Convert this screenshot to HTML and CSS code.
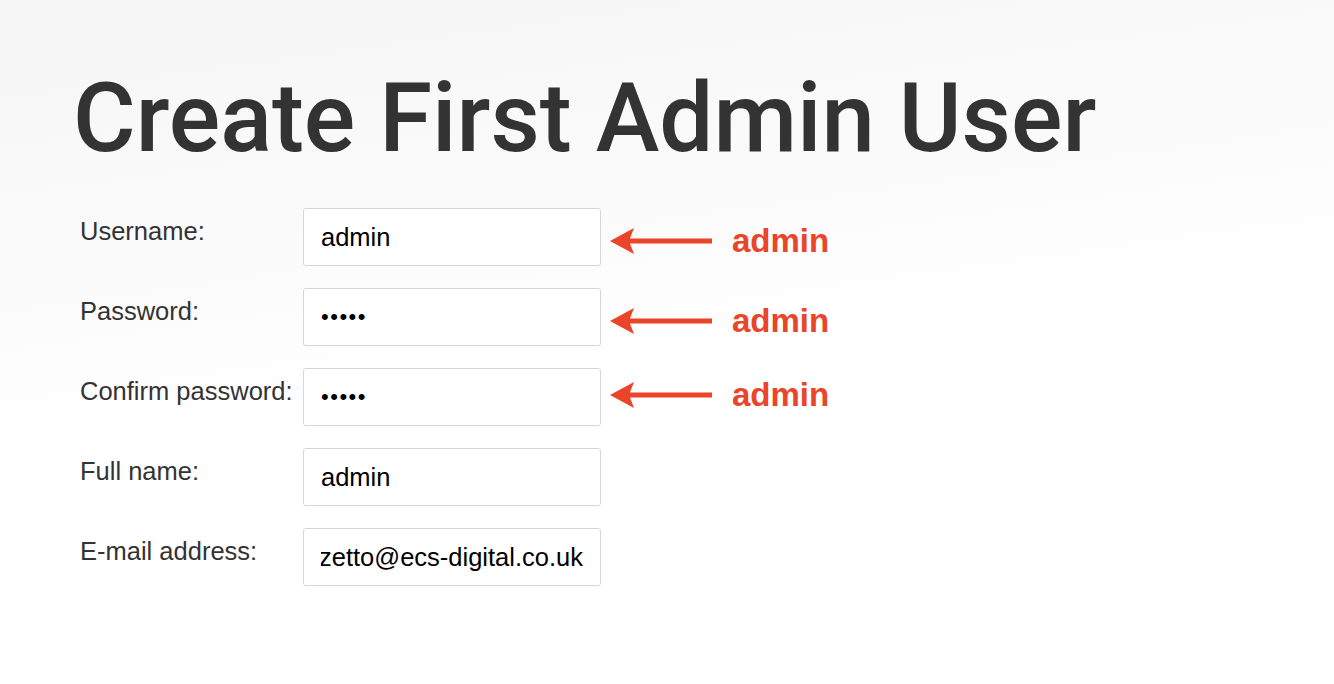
FILE: index.html
```html
<!DOCTYPE html>
<html lang="en">
<head>
<meta charset="utf-8">
<title>Create First Admin User</title>
<link rel="stylesheet" href="styles.css">
</head>
<body>
<main class="page">
  <h1 class="title">Create First Admin User</h1>
  <form class="form">
    <div class="row">
      <label class="label" for="u">Username:</label>
      <input class="field" id="u" type="text" value="admin">
      <div class="note">
        <svg class="arrow" width="102" height="28" viewBox="0 0 102 28"><path d="M0 14 L24 1 L20 11.5 L102 11.5 L102 16.5 L20 16.5 L24 27 Z" fill="#ea4429"/></svg>
        <span class="note-text">admin</span>
      </div>
    </div>
    <div class="row">
      <label class="label" for="p">Password:</label>
      <input class="field field-secret" id="p" type="password" value="admin">
      <div class="note">
        <svg class="arrow" width="102" height="28" viewBox="0 0 102 28"><path d="M0 14 L24 1 L20 11.5 L102 11.5 L102 16.5 L20 16.5 L24 27 Z" fill="#ea4429"/></svg>
        <span class="note-text">admin</span>
      </div>
    </div>
    <div class="row">
      <label class="label" for="c">Confirm password:</label>
      <input class="field field-secret" id="c" type="password" value="admin">
      <div class="note note-low">
        <svg class="arrow" width="102" height="28" viewBox="0 0 102 28"><path d="M0 14 L24 1 L20 11.5 L102 11.5 L102 16.5 L20 16.5 L24 27 Z" fill="#ea4429"/></svg>
        <span class="note-text">admin</span>
      </div>
    </div>
    <div class="row">
      <label class="label" for="f">Full name:</label>
      <input class="field" id="f" type="text" value="admin">
    </div>
    <div class="row">
      <label class="label" for="e">E-mail address:</label>
      <input class="field field-end" id="e" type="text" value="m.rizzetto@ecs-digital.co.uk">
    </div>
  </form>
</main>
</body>
</html>
```

FILE: styles.css
```css
html, body {
  margin: 0;
  padding: 0;
}
body {
  width: 1334px;
  height: 684px;
  overflow: hidden;
  background: linear-gradient(172deg, #f6f6f6 0%, #f9f9f9 22%, #fcfcfc 40%, #ffffff 52%, #ffffff 100%);
  color: #333;
  font-family: "Liberation Sans", Arial, sans-serif;
}
.page {
  padding: 70px 0 0 75px;
}
.title {
  margin: 0 0 0 -2px;
  font-family: Roboto, "Liberation Sans", sans-serif;
  font-weight: 500;
  font-size: 96px;
  line-height: 1;
  color: #333;
}
.form {
  margin-top: 42px;
  padding-left: 5px;
  display: flex;
  flex-direction: column;
  gap: 22px;
}
.row {
  position: relative;
  display: grid;
  grid-template-columns: 223px 298px;
  align-items: start;
}
.label {
  font-size: 25.5px;
  line-height: 30px;
  padding-top: 8px;
  color: #333;
  white-space: nowrap;
}
.field {
  box-sizing: border-box;
  width: 298px;
  height: 58px;
  margin: 0;
  padding: 0 17px;
  border: 1px solid #d6d6d6;
  border-radius: 3px;
  background: #fff;
  font-family: "Liberation Sans", Arial, sans-serif;
  font-size: 25.5px;
  color: #000;
  outline: none;
}
.field-secret {
  font-size: 22px;
  letter-spacing: 1.5px;
}
.field-end {
  direction: rtl;
}
.note {
  position: absolute;
  left: 530px;
  top: 15px;
  display: flex;
  align-items: center;
  gap: 20px;
}
.note-low {
  top: 9px;
}
.arrow {
  display: block;
}
.note-text {
  font-family: "Liberation Sans", Arial, sans-serif;
  font-weight: bold;
  font-size: 33px;
  line-height: 36px;
  color: #ea4429;
}
```
